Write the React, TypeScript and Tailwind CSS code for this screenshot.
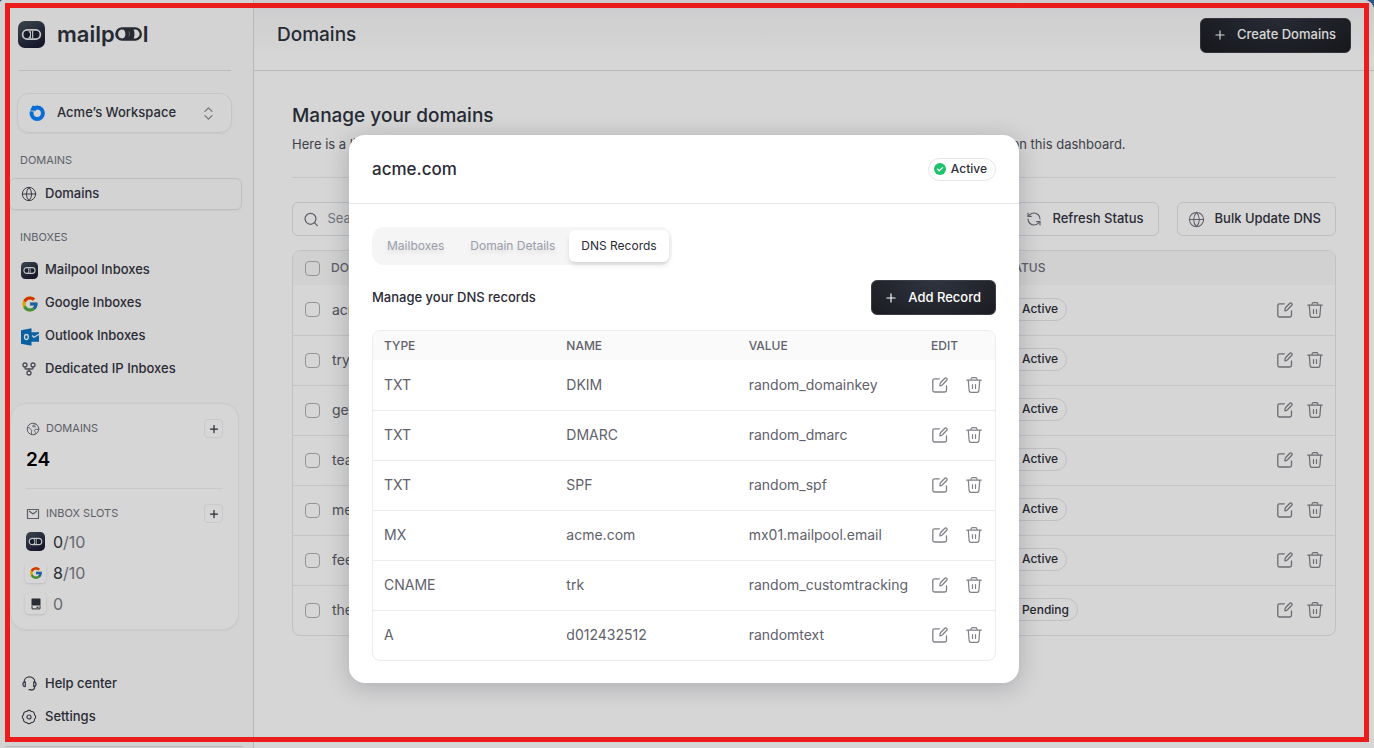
import React, { useState } from 'react'
import { Badge, ChevronsUpDown, GitFork, Globe, Plus, RefreshCcw, Search } from 'lucide-react'
import { FcGoogle } from 'react-icons/fc'

type IconProps = { className?: string }

const domains = [
  { name: 'acme.com', status: 'Active' },
  { name: 'tryacme.com', status: 'Active' },
  { name: 'getacme.com', status: 'Active' },
  { name: 'teamacme.com', status: 'Active' },
  { name: 'meetacme.com', status: 'Active' },
  { name: 'feelacme.com', status: 'Active' },
  { name: 'theacme.com', status: 'Pending' },
]

const records = [
  { type: 'TXT', name: 'DKIM', value: 'random_domainkey' },
  { type: 'TXT', name: 'DMARC', value: 'random_dmarc' },
  { type: 'TXT', name: 'SPF', value: 'random_spf' },
  { type: 'MX', name: 'acme.com', value: 'mx01.mailpool.email' },
  { type: 'CNAME', name: 'trk', value: 'random_customtracking' },
  { type: 'A', name: 'd012432512', value: 'randomtext' },
]

const tabs = ['Mailboxes', 'Domain Details', 'DNS Records']

const PoolIcon = ({ className }: IconProps) => (
  <svg viewBox="0 0 28 28" className={className} aria-hidden="true">
    <defs>
      <linearGradient id="pool" x1="0" y1="0" x2="0.6" y2="1">
        <stop offset="0" stopColor="#46545e" />
        <stop offset="1" stopColor="#1b1c33" />
      </linearGradient>
    </defs>
    <rect width="28" height="28" rx="7" fill="url(#pool)" />
    <rect x="4.8" y="9.3" width="18.4" height="9.4" rx="4.7" fill="#1d2132" stroke="#e8ebef" strokeWidth="1.8" />
    <path d="M10.500 10.500h3v7h-3c1.300-.9 2-2 2-3.500s-.7-2.600-2-3.500z" fill="#e8ebef" />
    <path d="M15.200 10v8" fill="none" stroke="#e8ebef" strokeWidth="1.2" />
  </svg>
)

const Wordmark = () => (
  <span className="flex items-center text-[22px] leading-7 font-semibold text-[#2d333d]">
    mailp
    <svg viewBox="0 0 29 16" className="-ml-px h-4 w-[29px]" aria-hidden="true">
      <path d="M8 1.200h13.200a6.800 6.800 0 0 1 0 13.600H8A6.800 6.800 0 0 1 8 1.200z" fill="#2d333d" />
      <path d="M8.200 3.600c2 0 3.200 1.900 3.200 4.400s-1.200 4.400-3.200 4.400C5.600 12.400 4 10.500 4 8s1.600-4.400 4.200-4.400z" fill="#fcfcfc" />
      <path d="M19.600 3.600h1.600a4.400 4.400 0 0 1 0 8.800h-1.600c.6-1.300.9-2.800.9-4.400s-.3-3.100-.9-4.400z" fill="#fcfcfc" />
      <path d="M14.800 5.500c.9 1.600.9 3.400 0 5" fill="none" stroke="#8e9299" strokeWidth=".7" />
    </svg>
    l
  </span>
)

const WorkspaceIcon = ({ className }: IconProps) => (
  <svg viewBox="0 0 16 16" className={className} fill="none" aria-hidden="true">
    <circle cx="8.200" cy="8.300" r="5.700" stroke="#0b82ff" strokeWidth="4" />
    <path d="M3.500.8c2.800-.6 3.700 1.800 5.300 2.200L6 6.500C5.200 4.600 3.900 3.800 1.800 4.200z" fill="#0b82ff" />
    <path d="M.7 6.200c1.600-1 3 .2 4.300 0" stroke="#fff" strokeWidth=".8" />
  </svg>
)

const OutlookIcon = ({ className }: IconProps) => (
  <svg viewBox="0 0 18 18" className={className} fill="none" aria-hidden="true">
    <path d="M10 4.200h8v9.600h-8z" fill="#0f78c8" />
    <path d="M11 7.500l2 1.800 5-3" stroke="#fff" strokeWidth="1.200" />
    <path d="M0 2.300L10.500.3v17.400L0 15.700z" fill="#0a72c0" />
    <ellipse cx="5.400" cy="9" rx="1.900" ry="2.500" stroke="#fff" strokeWidth="1.300" />
  </svg>
)

const EarthIcon = ({ className }: IconProps) => (
  <svg viewBox="0 0 14 14" className={className} fill="none" stroke="currentColor" strokeLinecap="round" strokeLinejoin="round" aria-hidden="true">
    <circle cx="7" cy="7" r="5.800" />
    <path d="M1.500 5.500c1.500-.2 2.500.3 2.600 1.200.1 1 1.700.7 1.600 1.900-.1 1-.5 1.700-.2 3.500M9.500 2c-.2 1.400-1.300 1.200-2.300 1.400-1.100.3-.7 1.400.3 1.500.8 0 1.200-.5 2-.2M12.500 8c-1-.8-2.200-1-3.200-.6-1.200.5-1.100 1.500-.4 2.100.6.600.6 1.200.4 2" />
  </svg>
)

const EnvelopeIcon = ({ className }: IconProps) => (
  <svg viewBox="0 0 14 14" className={className} fill="none" stroke="currentColor" strokeWidth="1.200" strokeLinecap="round" strokeLinejoin="round" aria-hidden="true">
    <path d="M1.500 2.500h11v9h-11z" />
    <path d="M3.500 4.200L7 7l3.500-2.800" />
  </svg>
)

const DriveIcon = ({ className }: IconProps) => (
  <svg viewBox="0 0 12 12" className={className} aria-hidden="true">
    <path d="M2.500.5h7c.6 0 1 .4 1 1v6h-9v-6c0-.6.400-1 1-1z" fill="#30353d" />
    <path d="M2 8v2.900h8V8" fill="none" stroke="#30353d" />
    <path d="M6.500 9.300h2" stroke="#30353d" strokeWidth="1.200" />
  </svg>
)

const HelpIcon = ({ className }: IconProps) => (
  <svg viewBox="0 0 16 16" className={className} fill="none" stroke="currentColor" strokeWidth="1.300" strokeLinecap="round" strokeLinejoin="round" aria-hidden="true">
    <path d="M2.300 6.300C2.300 3.300 4.500 1 8 1s5.700 2.300 5.700 5.300" />
    <path d="M3.500 6.300v5C1.800 11.300 1 10.400 1 8.800s.8-2.500 2.500-2.500zM12.500 6.300v5c1.700 0 2.500-.9 2.500-2.500s-.8-2.500-2.500-2.500z" />
    <path d="M13.500 11.500c0 2-1.500 3.500-4 3.500M7.500 14.600h2" />
  </svg>
)

const SettingsIcon = ({ className }: IconProps) => (
  <span className="grid">
    <Badge className={`${className} col-start-1 row-start-1`} strokeWidth={1.7} />
    <svg viewBox="0 0 16 16" className={`${className} col-start-1 row-start-1`} fill="none" stroke="currentColor" strokeWidth="1.200" aria-hidden="true">
      <circle cx="8" cy="8" r="2" />
    </svg>
  </span>
)

const EditIcon = ({ className }: IconProps) => (
  <svg viewBox="0 0 16 16" className={className} fill="none" stroke="currentColor" strokeWidth="1.300" strokeLinecap="round" strokeLinejoin="round" aria-hidden="true">
    <path d="M7.300 1.800H2.500C1.500 1.800.8 2.500.8 3.500v9.800c0 1 .7 1.700 1.700 1.700h10.300c1 0 1.700-.7 1.700-1.700V9" />
    <path d="M8 8.900c-.3-1.500 0-2.600.9-3.600l3.700-3.800c.7-.7 1.500-.7 2.100-.1s.6 1.400-.1 2.100l-3.700 3.800C10 8.400 9.200 8.700 8 8.900z" />
  </svg>
)

const TrashIcon = ({ className }: IconProps) => (
  <svg viewBox="0 0 16 16" className={className} fill="none" stroke="currentColor" strokeWidth="1.200" strokeLinecap="round" strokeLinejoin="round" aria-hidden="true">
    <path d="M.8 3.200h14.400M5 3V2.300C5 1.300 5.700.7 6.600.7h2.800c.9 0 1.600.6 1.600 1.600V3" />
    <path d="M2.300 3.400l.8 10.200c.1 1 .8 1.700 1.800 1.700h6.200c1 0 1.700-.7 1.800-1.700l.8-10.200M6.500 7.500v4M9.500 7.500v4" />
  </svg>
)

const StatusBadge = ({ status }: { status: string }) => (
  <span className="inline-flex h-[23px] items-center gap-1 rounded-full border border-[#e6e6ea] bg-white pr-2 pl-1 text-xs font-medium text-[#2e2e38]">
    <svg viewBox="0 0 14 14" className="size-3.5" aria-hidden="true">
      <circle cx="7" cy="7" r="6" fill={status === 'Active' ? '#1fc16b' : '#f5a524'} />
      <path d="M4.600 7.200l1.700 1.600 3.200-3.200" fill="none" stroke="#fff" strokeWidth="1.300" strokeLinecap="round" strokeLinejoin="round" />
    </svg>
    {status}
  </span>
)

const RowActions = ({ name, tight }: { name: string; tight?: boolean }) => (
  <div className={tight ? 'flex items-center gap-3.5 text-[#808088]' : 'flex items-center gap-[18px] text-[#808088]'}>
    <button type="button" aria-label={`Edit ${name}`}>
      <EditIcon className="size-4" />
    </button>
    <button type="button" aria-label={`Delete ${name}`}>
      <TrashIcon className="size-4" />
    </button>
  </div>
)

const DarkButton = ({ children }: { children: React.ReactNode }) => (
  <button
    type="button"
    className="flex h-[35px] items-center gap-2.5 rounded-md border border-[#3a3d45] bg-[radial-gradient(ellipse_at_top,#2f3440,#1b1c21)] pr-3.5 pl-3 text-[13px] font-medium text-white"
  >
    <Plus className="size-3.5" strokeWidth={2} />
    {children}
  </button>
)

const OutlineButton = ({ children }: { children: React.ReactNode }) => (
  <button
    type="button"
    className="flex h-[34px] items-center gap-2.5 rounded-md border border-[#e2e2ea] pr-3.5 pl-2.5 text-[13px] font-medium text-[#33343f]"
  >
    {children}
  </button>
)

const NavItem = ({ icon, label, active }: { icon: React.ReactNode; label: string; active?: boolean }) => (
  <a
    href="#"
    className={
      active
        ? 'flex h-8 items-center gap-2 rounded-md border border-[#e4e4e7] pl-[11px] text-[13px] font-medium text-[#33343f] shadow-xs'
        : 'flex h-[33px] items-center gap-2 pl-3 text-[13px] font-medium text-[#33343f]'
    }
  >
    <span className="grid size-4 place-items-center text-[#44454f]">{icon}</span>
    {label}
  </a>
)

const SectionLabel = ({ children }: { children: React.ReactNode }) => (
  <h2 className="mt-[19px] ml-5 text-[11px] leading-4 text-[#70747f]">{children}</h2>
)

const AddButton = ({ label }: { label: string }) => (
  <button
    type="button"
    aria-label={label}
    className="grid size-[19px] place-items-center rounded border border-[#f0f0f2] text-[#30353d]"
  >
    <Plus className="size-3" strokeWidth={2.5} />
  </button>
)

const SlotTile = ({ children }: { children: React.ReactNode }) => (
  <span className="-ml-px grid size-[21px] place-items-center rounded bg-white shadow">{children}</span>
)

const Sidebar = () => (
  <aside className="flex w-[254px] shrink-0 flex-col border-r border-[#dcdce0] bg-[#fcfcfc]">
    <div className="flex h-[70px] items-center gap-3 pb-0.5 pl-[18px]">
      <PoolIcon className="size-[27px]" />
      <Wordmark />
    </div>
    <hr className="mr-[22px] ml-[18px] border-[#e0e0e3]" />

    <button
      type="button"
      className="mt-[22px] mr-[21px] ml-[17px] flex h-10 items-center gap-3 rounded-xl border border-[#ebebee] bg-white/40 pr-3.5 pl-[11px] text-[13px] font-medium text-[#33343f] shadow-xs"
    >
      <WorkspaceIcon className="size-4" />
      Acme’s Workspace
      <ChevronsUpDown className="ml-auto size-[17px] text-[#8b8c95]" strokeWidth={1.8} />
    </button>

    <nav className="flex flex-col">
      <SectionLabel>DOMAINS</SectionLabel>
      <div className="mt-[10px] mr-[11px] ml-[9px]">
        <NavItem active label="Domains" icon={<Globe className="size-4" strokeWidth={1.5} />} />
      </div>
      <SectionLabel>INBOXES</SectionLabel>
      <div className="mt-2 ml-[9px]">
        <NavItem label="Mailpool Inboxes" icon={<PoolIcon className="size-[17px]" />} />
        <NavItem label="Google Inboxes" icon={<FcGoogle className="size-[18px]" />} />
        <NavItem label="Outlook Inboxes" icon={<OutlookIcon className="size-[18px]" />} />
        <NavItem label="Dedicated IP Inboxes" icon={<GitFork className="size-4 text-[#5c5d66]" strokeWidth={2} />} />
      </div>
    </nav>

    {/* usage card */}
    <div className="mt-[18px] mr-[14px] ml-[10px] rounded-2xl border border-[#f2f2f4] bg-white px-[15px] pt-[15px] pb-2.5 text-[#6f717b] shadow-xs">
      <div className="flex items-center gap-1.5 text-[11px]">
        <EarthIcon className="size-3.5" />
        <span className="flex-1">DOMAINS</span>
        <AddButton label="Add domains" />
      </div>
      <p className="mt-2 text-[19px] leading-7 font-semibold text-black">24</p>
      <hr className="mt-3.5 border-[#f0f0f2]" />
      <div className="mt-[15px] flex items-center gap-1.5 text-[11px]">
        <EnvelopeIcon className="size-3.5" />
        <span className="flex-1">INBOX SLOTS</span>
        <AddButton label="Add inbox slots" />
      </div>
      <ul className="mt-[3px] text-base text-[#7b7d87]">
        <li className="flex h-[31px] items-center gap-2">
          <PoolIcon className="size-[19px]" />
          <span><span className="text-[#30353d]">0</span>/10</span>
        </li>
        <li className="flex h-[31px] items-center gap-[7px]">
          <SlotTile><FcGoogle className="size-3.5" /></SlotTile>
          <span><span className="text-[#30353d]">8</span>/10</span>
        </li>
        <li className="flex h-[31px] items-center gap-[7px]">
          <SlotTile><DriveIcon className="size-3" /></SlotTile>
          <span>0</span>
        </li>
      </ul>
    </div>

    <div className="mt-[37px] ml-[9px]">
      <NavItem label="Help center" icon={<HelpIcon className="size-[15px]" />} />
      <NavItem label="Settings" icon={<SettingsIcon className="size-4" />} />
    </div>
    <hr className="mt-auto mr-[10px] mb-px ml-[5px] border-[#dcdce0]" />
  </aside>
)

const DomainsPage = () => (
  <main className="min-w-0 flex-1">
    <header className="flex h-[71px] items-center justify-between border-b border-[#dcdce0] bg-gradient-to-b from-[#f4f4f7] to-white to-80% px-[23px]">
      <h1 className="text-[19px] font-medium text-[#2d333d]">Domains</h1>
      <DarkButton>Create Domains</DarkButton>
    </header>

    <section className="px-[38px] pt-[31px]">
      <h2 className="text-[19px] leading-7 font-medium text-[#2d333d]">Manage your domains</h2>
      <p className="mt-1 text-[13px] leading-5 whitespace-nowrap text-[#4b4d58]">
        Here is a list of all the domains that are connected to your workspaces. You can view and manage every one of them on this dashboard.
      </p>
      <hr className="mt-[23px] border-[#ebebed]" />

      <div className="mt-6 flex gap-[18px]">
        <label className="flex h-[34px] flex-1 items-center gap-2 rounded-md border border-[#e2e2ea] px-2.5 text-[#6f717b]">
          <Search className="size-[17px]" strokeWidth={1.8} />
          <input type="text" aria-label="Search domains" placeholder="Search" className="w-full text-[13px] outline-none placeholder:text-[#8b8c95]" />
        </label>
        <OutlineButton>
          <RefreshCcw className="size-4 text-[#6f717b]" strokeWidth={1.7} />
          Refresh Status
        </OutlineButton>
        <OutlineButton>
          <Globe className="size-[17px] text-[#6f717b]" strokeWidth={1.5} />
          Bulk Update DNS
        </OutlineButton>
      </div>

      <div className="mt-[14px] overflow-hidden rounded-lg border border-[#e8e8ea]">
        <table className="w-full table-fixed text-left">
          <colgroup>
            <col className="w-[38px]" />
            <col />
            <col className="w-[278px]" />
            <col className="w-[58px]" />
          </colgroup>
          <thead className="bg-[#fafafa] text-xs text-[#6f717b]">
            <tr className="h-[34px]">
              <th className="pl-3">
                <input type="checkbox" aria-label="Select all domains" className="block size-[15px] appearance-none rounded border border-[#b0b0b6]" />
              </th>
              <th className="font-medium">DOMAIN</th>
              <th className="font-medium">STATUS</th>
              <th aria-label="Actions" />
            </tr>
          </thead>
          <tbody className="divide-y divide-[#ebebed]">
            {domains.map((d) => (
              <tr key={d.name} className="h-[50px]">
                <td className="pl-3">
                  <input type="checkbox" aria-label={`Select ${d.name}`} className="block size-[15px] appearance-none rounded border border-[#b0b0b6]" />
                </td>
                <td className="pl-px text-sm text-[#5c5d66]">{d.name}</td>
                <td><StatusBadge status={d.status} /></td>
                <td><RowActions name={d.name} tight /></td>
              </tr>
            ))}
          </tbody>
        </table>
      </div>
    </section>
  </main>
)

const RecordsDialog = () => {
  const [tab, setTab] = useState('DNS Records')

  return (
    <div role="dialog" aria-label="acme.com" className="w-[670px] rounded-2xl bg-white shadow-[0_4px_24px_rgba(20,25,40,0.22)]">
      <div className="flex h-[69px] items-center justify-between border-b border-[#e8e8ea] px-[23px]">
        <h2 className="pt-0.5 text-[17px] font-medium text-[#2a2a35]">acme.com</h2>
        <StatusBadge status="Active" />
      </div>

      <div className="px-[23px] pt-[23px] pb-[22px]">
        <div role="tablist" className="inline-flex h-[38px] items-center gap-0.5 rounded-xl bg-[#f5f5f5] px-[3px] align-top text-xs">
          {tabs.map((t) => (
            <button
              key={t}
              type="button"
              role="tab"
              aria-selected={t === tab}
              onClick={() => setTab(t)}
              className={
                t === tab
                  ? 'h-8 rounded-md bg-white px-3 text-[#2a2a35] shadow-md'
                  : 'h-8 px-3 text-[#9a9eac] text-shadow-[0_3px_5px_rgba(0,0,0,0.12)]'
              }
            >
              {t}
            </button>
          ))}
        </div>

        <div className="mt-[15px] flex items-center justify-between">
          <h3 className="text-[13px] font-medium text-[#2a2a35]">Manage your DNS records</h3>
          <DarkButton>Add Record</DarkButton>
        </div>

        <div className="mt-[15px] overflow-hidden rounded-lg border border-[#ececee]">
          <table className="w-full table-fixed text-left text-[#5f616b]">
            <colgroup>
              <col />
              <col />
              <col />
              <col className="w-[75px]" />
            </colgroup>
            <thead className="bg-[#fafafa] text-xs">
              <tr className="h-[29px]">
                <th className="pl-[11px] font-medium">TYPE</th>
                <th className="pl-[11px] font-medium">NAME</th>
                <th className="pl-[11px] font-medium">VALUE</th>
                <th className="pl-[11px] font-medium">EDIT</th>
              </tr>
            </thead>
            <tbody className="divide-y divide-[#ececee] text-sm">
              {records.map((r) => (
                <tr key={r.value} className="h-[50px]">
                  <td className="pl-[11px]">{r.type}</td>
                  <td className="pl-[11px]">{r.name}</td>
                  <td className="pl-[11px] whitespace-nowrap">{r.value}</td>
                  <td className="pl-3"><RowActions name={r.name} /></td>
                </tr>
              ))}
            </tbody>
          </table>
        </div>
      </div>
    </div>
  )
}

const App = () => {
  return (
    <div className="relative bg-[#35507f] font-['Inter',sans-serif]">
      <div className="relative flex min-h-screen overflow-hidden rounded-tl-sm rounded-tr-[10px] bg-white">
        <Sidebar />
        <DomainsPage />
        {/* backdrop */}
        <div className="absolute inset-0 flex items-center justify-center bg-black/16 pt-[70px] pr-1.5">
          <RecordsDialog />
        </div>
      </div>
      {/* highlight frame */}
      <div className="pointer-events-none absolute top-[3px] right-[5px] bottom-[6px] left-[5px] border-5 border-[#ea1c1c]" />
    </div>
  )
}

export default App
